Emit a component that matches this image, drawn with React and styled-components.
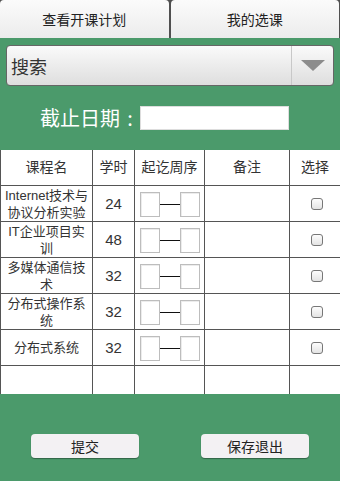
import React from 'react';
import styled, { createGlobalStyle } from 'styled-components';

const GlobalStyle = createGlobalStyle`
  html, body {
    margin: 0;
    padding: 0;
    background: #4b9a6b;
  }
  body {
    font-family: "Noto Sans CJK SC", "Liberation Sans", sans-serif;
    color: #333;
  }
`;

const Page = styled.div`
  width: 340px;
  height: 481px;
  display: flex;
  flex-direction: column;
  background: #4b9a6b;
  overflow: hidden;
`;

const TabBar = styled.nav`
  display: flex;
  gap: 2px;
  height: 38px;
  padding-right: 1px;
  background: #505050;
`;

const Tab = styled.button`
  flex: 1;
  border: none;
  border-radius: 4px 4px 0 0;
  background: linear-gradient(#fbfbfb, #ececec);
  font-family: inherit;
  font-size: 14px;
  color: #222;
  padding: 0;
  cursor: pointer;
`;

const Select = styled.div`
  margin: 7px 6px 0 6px;
  height: 39px;
  display: flex;
  border: 1px solid #666;
  border-radius: 4px;
  background: linear-gradient(#fafafa, #dedede);
  overflow: hidden;
`;

const SelectText = styled.span`
  flex: 1;
  display: flex;
  align-items: center;
  padding-left: 4px;
  font-size: 18px;
  color: #333;
  border-right: 1px solid #c8c8c8;
`;

const SelectArrow = styled.span`
  width: 41px;
  display: flex;
  align-items: center;
  justify-content: center;
`;

const DateRow = styled.div`
  height: 64px;
  display: flex;
  align-items: center;
  padding-left: 40px;
`;

const DateLabel = styled.label`
  display: flex;
  font-size: 20px;
  color: #fff;
  line-height: 24px;
`;

const Colon = styled.span`
  width: 20px;
  text-align: center;
`;

const DateInput = styled.input`
  width: 149px;
  height: 24px;
  box-sizing: border-box;
  border: 1px solid #ddd;
  background: #fff;
  margin: 0;
`;

const Table = styled.table`
  width: 340px;
  border-collapse: collapse;
  table-layout: fixed;
  background: #fff;
`;

const Cell = styled.td`
  border: 1px solid #555;
  border-top: ${(p) => (p.$first ? 'none' : '1px solid #555')};
  border-bottom: ${(p) => (p.$last ? 'none' : '1px solid #555')};
  height: ${(p) => p.$h || 35}px;
  padding: 0 2px;
  text-align: center;
  vertical-align: middle;
  font-family: "Liberation Sans", "Noto Sans CJK SC", sans-serif;
  font-size: ${(p) => p.$size || 13}px;
  line-height: 17px;
  color: #333;
  word-break: break-all;
`;

const HeadCell = styled(Cell).attrs({ as: 'th' })`
  font-weight: normal;
  font-size: 14px;
`;

const WeekGroup = styled.div`
  display: flex;
  align-items: center;
  justify-content: center;
  padding-top: 2px;
`;

const WeekBox = styled.span`
  width: 20px;
  height: 25px;
  box-sizing: border-box;
  border: 1px solid #bdbdbd;
  background: #fff;
  box-shadow: inset 1px 1px 0 #ececec;
`;

const Dash = styled.span`
  width: 20px;
  height: 1px;
  background: #111;
`;

const Check = styled.span`
  display: inline-block;
  width: 12px;
  height: 12px;
  box-sizing: border-box;
  margin: 4px 0 0 4px;
  border: 1px solid #777;
  border-radius: 3px;
  background: linear-gradient(#fdfdfd, #e4e4e4);
`;

const Footer = styled.footer`
  flex: 1;
  display: flex;
  align-items: flex-start;
  gap: 62px;
  padding: 40px 0 0 31px;
`;

const ActionButton = styled.button`
  width: 108px;
  height: 24px;
  border: none;
  border-radius: 4px;
  background: #f3f1f3;
  box-shadow: 0 1px 1px rgba(0, 0, 0, 0.35);
  font-family: inherit;
  font-size: 14px;
  color: #222;
  padding: 0;
  cursor: pointer;
`;

const courses = [
  { name: 'Internet技术与协议分析实验', hours: 24 },
  { name: 'IT企业项目实训', hours: 48 },
  { name: '多媒体通信技术', hours: 32 },
  { name: '分布式操作系统', hours: 32 },
  { name: '分布式系统', hours: 32 },
];

const widths = [92, 42, 70, 85, 51];

export default function App() {
  return (
    <Page>
      <GlobalStyle />
      <TabBar>
        <Tab>查看开课计划</Tab>
        <Tab>我的选课</Tab>
      </TabBar>
      <Select>
        <SelectText>搜索</SelectText>
        <SelectArrow>
          <svg width="24" height="11" viewBox="0 0 24 11">
            <polygon points="0,0 24,0 12,11" fill="#8c8c8c" />
          </svg>
        </SelectArrow>
      </Select>
      <DateRow>
        <DateLabel>
          截止日期<Colon>:</Colon>
        </DateLabel>
        <DateInput type="text" />
      </DateRow>
      <Table>
        <colgroup>
          {widths.map((w, i) => (
            <col key={i} style={{ width: w }} />
          ))}
        </colgroup>
        <thead>
          <tr>
            <HeadCell $first>课程名</HeadCell>
            <HeadCell $first>学时</HeadCell>
            <HeadCell $first>起讫周序</HeadCell>
            <HeadCell $first>备注</HeadCell>
            <HeadCell $first>选择</HeadCell>
          </tr>
        </thead>
        <tbody>
          {courses.map((c) => (
            <tr key={c.name}>
              <Cell>{c.name}</Cell>
              <Cell $size={15}>{c.hours}</Cell>
              <Cell>
                <WeekGroup>
                  <WeekBox />
                  <Dash />
                  <WeekBox />
                </WeekGroup>
              </Cell>
              <Cell />
              <Cell>
                <Check />
              </Cell>
            </tr>
          ))}
          <tr>
            <Cell $last $h={28} />
            <Cell $last $h={28} />
            <Cell $last $h={28} />
            <Cell $last $h={28} />
            <Cell $last $h={28} />
          </tr>
        </tbody>
      </Table>
      <Footer>
        <ActionButton>提交</ActionButton>
        <ActionButton>保存退出</ActionButton>
      </Footer>
    </Page>
  );
}
